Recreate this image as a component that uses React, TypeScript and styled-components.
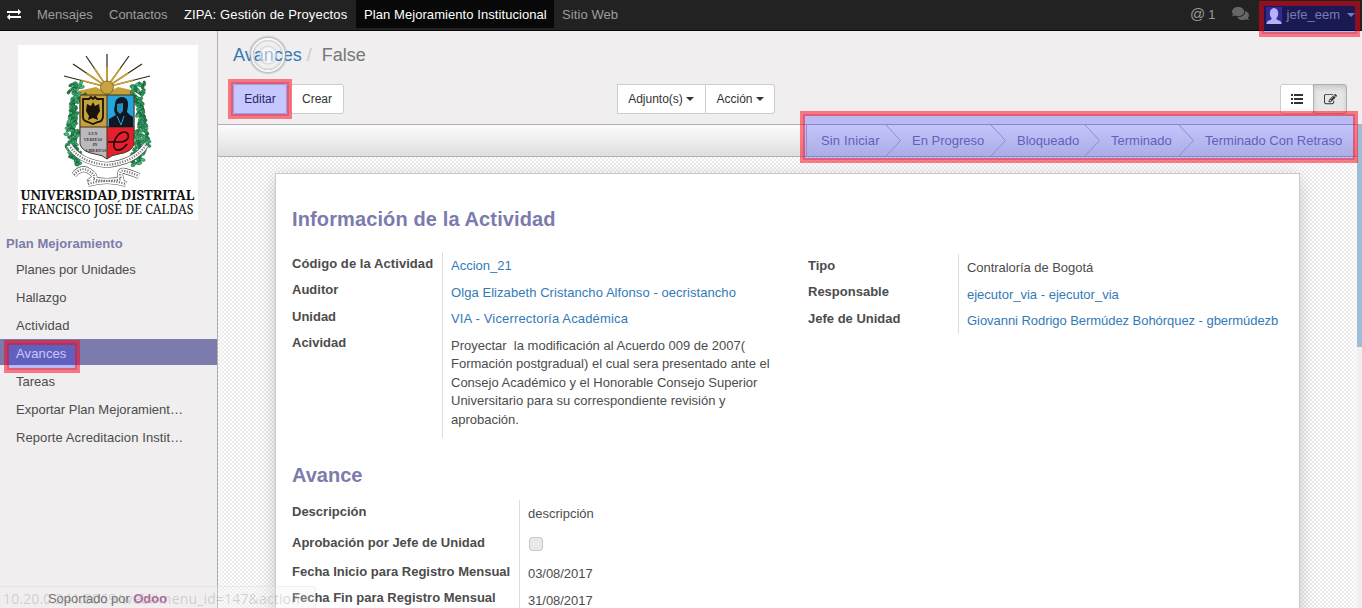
import React from 'react';
import styled, { createGlobalStyle, css } from 'styled-components';
import { FaComments } from 'react-icons/fa';

const Global = createGlobalStyle`
  * { box-sizing: border-box; }
  body { margin: 0; overflow: hidden; background: #fff; color: #4c4c4c;
    font: 13px/18px "Liberation Sans", Arial, sans-serif; }
`;
const sans = '"Liberation Sans", Arial, sans-serif';

const Page = styled.div`
  position: relative; width: 1362px; height: 608px; overflow: hidden;
  display: flex; flex-direction: column;
`;
const NavBar = styled.nav`
  height: 31px; flex: none; background: #222; border-bottom: 1px solid #080808;
  display: flex; align-items: stretch; color: #999; line-height: 30px;
`;
const NavIcon = styled.span`
  display: flex; align-items: center; width: 29px; padding: 0 0 3px 7px; color: #fff;
`;
const NavItem = styled.a<{ $tone?: 'bright' | 'active'; $w: number; $ls?: number }>`
  padding: 0 8px; color: ${p => (p.$tone ? '#fff' : '#9d9d9d')};
  background: ${p => (p.$tone === 'active' ? '#080808' : 'transparent')};
  height: 28px; white-space: nowrap; width: ${p => p.$w}px; letter-spacing: ${p => p.$ls ?? 0}px;
`;
const NavRight = styled.div`
  margin-left: auto; display: flex; align-items: center; padding-right: 7px; height: 30px;
`;
const Mention = styled.span`margin-right: 16px; height: 30px; display: flex; gap: 3px;`;
const At = styled.span`font-size: 15px; line-height: 27px;`;
const Chat = styled.span`display: flex; margin-right: 17px; color: #666; padding-bottom: 3px;`;
const User = styled.span`display: flex; align-items: center; color: #9d9d9d;`;
const UserName = styled.span`margin: 0 7px 0 5px; line-height: 32px;`;
const Caret = styled.i<{ $space?: number }>`
  display: inline-block; border: 4px solid transparent; border-top-color: currentColor;
  border-bottom: 0; margin-left: ${p => p.$space ?? 0}px; vertical-align: middle;
`;
const Body = styled.div`flex: 1; min-height: 0; display: flex;`;
const SideBar = styled.aside`
  width: 218px; flex: none; background: #f0eeee; border-right: 1px solid #afafb6;
  display: flex; flex-direction: column; padding-top: 14px;
`;
const LogoBox = styled.div`width: 180px; height: 175px; margin-left: 18px; background: #fff;`;
const MenuTitle = styled.h4`
  margin: 14px 0 3px 6px; font: bold 13px/20px ${sans}; color: #7c7bad; letter-spacing: .07px;
`;
const MenuItem = styled.a<{ $active?: boolean }>`
  height: 26px; margin-bottom: 2px; padding-left: 16px; line-height: 26px; white-space: nowrap;
  ${p => p.$active && css`
    background: #7c7bad; color: #fff; line-height: 30px; margin: -2px 0 4px; letter-spacing: .1px;
  `}
`;
const MenuText = styled.span<{ $ls: number }>`letter-spacing: ${p => p.$ls}px;`;
const Footer = styled.div`
  margin-top: auto; padding: 0 0 0 48px; line-height: 18px; letter-spacing: -.05px;
  b { color: #a24689; }
`;
const Main = styled.main`flex: 1; min-width: 0; display: flex; flex-direction: column;`;
const ControlPanel = styled.header`
  height: 94px; flex: none; background: #f0eeee; border-bottom: 1px solid #afafb6;
  padding: 13px 15px 0 15px;
`;
const Crumbs = styled.div`
  font-size: 18px; line-height: 22px; color: #777; height: 40px;
  a { color: #337ab7; }
  i { color: #ccc; font-style: normal; padding: 0 10px 0 5px; }
`;
const Tools = styled.div`display: flex; font-size: 12px; align-items: flex-start;`;
const Button = styled.button<{ $w: number; $joined?: boolean; $pressed?: boolean }>`
  width: ${p => p.$w}px; height: 30px; padding: 0; font: 12px/18px ${sans}; color: #333;
  background: ${p => (p.$pressed ? '#e6e6e6' : '#fff')};
  border: 1px solid ${p => (p.$pressed ? '#adadad' : '#ccc')}; border-radius: 3px;
  display: inline-flex; align-items: center; justify-content: center;
  ${p => p.$joined && css`border-radius: 0 3px 3px 0; margin-left: -1px;`}
  ${p => p.$pressed && css`box-shadow: inset 0 3px 5px rgba(0,0,0,.125);`}
`;
const CreateButton = styled(Button)`margin-left: 3px;`;
const SquareButton = styled(Button)`border-radius: 0; padding-right: 1px;`;
const Group = styled.div<{ $before: string }>`display: flex; margin-left: ${p => p.$before};`;
const Content = styled.div`flex: 1; min-height: 0; display: flex;`;
const View = styled.div`flex: 1; min-width: 0; display: flex; flex-direction: column;`;
const StatusBar = styled.div`
  height: 32px; flex: none; display: flex; justify-content: flex-end;
  background: linear-gradient(#fcfcfc, #dedede); border-bottom: 1px solid #afafb6;
`;
const Stages = styled.div`display: flex; border-left: 1px solid #bbb; color: #7c7bad; line-height: 32px;`;
const Stage = styled.span<{ $w: number; $pad: number }>`
  width: ${p => p.$w}px; padding-left: ${p => p.$pad}px; display: flex; white-space: nowrap;
  &:first-child { letter-spacing: .15px; }
`;
const Arrow = styled.svg`margin-left: auto; width: 16px; height: 31px; flex: none; overflow: visible;`;
const Scroll = styled.div`
  flex: 1; min-height: 0; overflow: hidden; display: flex; padding: 16px 0 0 57px;
  background: repeating-conic-gradient(#ececec 0 25%, #fff 0 50%) 0 0 / 4px 4px;
`;
const Sheet = styled.section`
  width: 1025px; height: 600px; flex: none; background: #fff; border: 1px solid #c8c8d3;
  box-shadow: 0 5px 18px rgba(0,0,0,.2); padding: 32px 16px 0;
`;
const ScrollTrack = styled.div`width: 5px; flex: none; background: #f0eeee;`;
const ScrollThumb = styled.div`height: 222px; background: #a0bbd6;`;
const Heading = styled.h2<{ $below: number; $ls?: number }>`
  margin: 0 0 ${p => p.$below}px; font: bold 20px/26px ${sans}; color: #7c7bad;
  letter-spacing: ${p => p.$ls ?? 0}px;
`;
const Columns = styled.div`display: flex; height: 186px; margin-bottom: 24px;`;
const FieldSet = styled.div<{ $label: number; $width: number; $top?: number }>`
  width: ${p => p.$width}px; display: grid; grid-template-columns: ${p => p.$label}px 1fr;
  align-items: start; margin-top: ${p => p.$top ?? 0}px; align-self: flex-start;
`;
const Labels = styled.div`
  font-weight: bold; display: flex; flex-direction: column; white-space: nowrap;
  padding-top: 3px; letter-spacing: .03px;
`;
const Values = styled.div<{ $bottom?: number }>`
  border-left: 1px solid #ddd; padding: 5px 0 ${p => p.$bottom ?? 9}px 8px;
  display: flex; flex-direction: column;
`;
const Cell = styled.div<{ $h?: number; $link?: boolean; $ls?: number }>`
  height: ${p => p.$h ?? 26.5}px; line-height: 18.5px; white-space: pre-wrap;
  color: ${p => (p.$link ? '#337ab7' : 'inherit')}; letter-spacing: ${p => p.$ls ?? 0}px;
`;
const Box = styled.span`
  display: block; width: 14px; height: 14px; margin: 4px 0 0 1px; border: 1px solid #c8c8c8;
  border-radius: 3px; background: #e9e9e9;
`;
const Marker = styled.div<{ $x: number; $y: number; $w: number; $h: number }>`
  position: absolute; left: ${p => p.$x + 3}px; top: ${p => p.$y + 3}px;
  width: ${p => p.$w - 6}px; height: ${p => p.$h - 6}px; background: rgba(0,0,255,.22);
  &::after { content: ''; position: absolute; inset: -3px; border: 5px solid rgba(255,0,16,.5); }
`;
const Ripple = styled.svg`position: absolute; left: 247px; top: 34px; width: 42px; height: 42px;`;
const UrlHint = styled.div`
  position: absolute; left: 0; top: 586px; width: 316px; height: 24px; padding-left: 3px;
  font: 14px/23px "Open Sans", sans-serif; white-space: nowrap; color: rgba(80,80,80,.22);
  background: rgba(240,240,240,.25); border: 1px solid rgba(160,160,160,.13); border-left: 0;
  border-radius: 0 4px 0 0; overflow: hidden; letter-spacing: .16px;
`;

const rays = [[33, 22], [42, 10], [55, 2], [76, 0], [98, 2], [111, 10], [119, 22]];

function ExchangeIcon() {
  return (
    <svg width="14" height="14" viewBox="0 0 1792 1792" fill="currentColor">
      <path d="M1792 1184v192q0 13-9.500 22.500t-22.500 9.500h-1376v192q0 13-9.500 22.500t-22.500 9.500q-12 0-24-10l-319-320q-9-9-9-22 0-14 9-23l320-320q9-9 23-9 13 0 22.500 9.500t9.500 22.500v192h1376q13 0 22.500 9.500t9.500 22.500zm0-544q0 14-9 23l-320 320q-9 9-23 9-13 0-22.500-9.500t-9.500-22.500v-192h-1376q-13 0-22.500-9.500t-9.500-22.500v-192q0-13 9.500-22.500t22.500-9.500h1376v-192q0-14 9-23t23-9q12 0 24 10l319 319q9 9 9 23z" />
    </svg>
  );
}

function ListIcon() {
  return (
    <svg width="12" height="10" viewBox="0 0 12 10" fill="#333">
      <path d="M0 0h2v2H0zM3 0h9v2H3zM0 4h2v2H0zM3 4h9v2H3zM0 8h2v2H0zM3 8h9v2H3z" />
    </svg>
  );
}

function EditIcon() {
  return (
    <svg width="13" height="13" viewBox="0 0 1792 1792" fill="#333">
      <path d="M888 1184l116-116-152-152-116 116v56h96v96h56zm440-720q-16-16-33 1l-350 350q-17 17-1 33t33-1l350-350q17-17 1-33zm80 594v190q0 119-84.500 203.500t-203.500 84.500h-832q-119 0-203.500-84.500t-84.500-203.500v-832q0-119 84.500-203.500t203.500-84.500h832q63 0 117 25 15 7 18 23 3 17-9 29l-49 49q-14 14-32 8-23-6-45-6h-832q-66 0-113 47t-47 113v832q0 66 47 113t113 47h832q66 0 113-47t47-113v-126q0-13 9-22l64-64q15-15 35-7t20 29zm-96-738l288 288-672 672h-288v-288zm444 132l-92 92-288-288 92-92q28-28 68-28t68 28l152 152q28 28 28 68t-28 68z" />
    </svg>
  );
}

// Outer edge of the laurel, as a distance from the shield's axis, by height.
const laurelEdge = (y: number) =>
  y < 50 ? 38 : y < 75 ? 34 + (y - 50) * 0.16 : y < 98 ? 38 + (y - 75) * 0.2 : 42.5 - (y - 98) * 0.35;
const scatter = (n: number) => {
  const v = Math.sin(n * 12.9898) * 43758.5453;
  return v - Math.floor(v);
};

function Laurel() {
  const greens = ['#2fae68', '#39c079', '#1d7c48', '#45b97a', '#2a9a5b'];
  return (
    <g>
      {Array.from({ length: 240 }, (_, i) => {
        const side = i % 2 ? 1 : -1;
        const n = i + 1;
        const y = 38 + (i / 240) * 82;
        const depth = y > 54 && y < 86 ? 7 : 13;
        const x = 89 + side * (laurelEdge(y) - scatter(n) * depth);
        return (
          <ellipse key={i} cx={x} cy={y} rx="2.600" ry="1.500" fill={greens[n % 5]} stroke="#14452a"
            strokeWidth=".4" transform={`rotate(${scatter(n + 500) * 180} ${x} ${y})`} />
        );
      })}
    </g>
  );
}

function Crest() {
  const ribbons = 'M51 100Q61 117 89 120Q117 117 128 100M56 130q7-9 15-4t4 8q14 4 28 0q-3-10 4-8t14 5M70 139q19-6 38 0';
  const shield = 'M62 50H116V99Q114 107 101 109Q93 110 89 114Q85 110 77 109Q64 107 62 99z';
  return (
    <svg width="180" height="175" viewBox="0 0 180 175">
      <g stroke="#30280f" strokeWidth="1.2">
        {rays.map(([x, y]) => <line key={x} x1="89" y1="42" x2={x + 13} y2={y + 9} />)}
      </g>
      <g stroke="#c5a03a" strokeWidth="1.8">
        {rays.map(([x, y]) => <line key={x} x1="89" y1="42" x2={89 + (x - 76) * 0.6} y2={42 + (y - 33) * 0.6} />)}
      </g>
      <path d="M60 46l18-4 11 6 11-6 18 4-4 4H64z" fill="#c7a038" />
      <g fill="#fff" stroke="#444" strokeWidth=".7">
        <path d="M55 56q-4 9 0 14q-4 8 2 18l5-3V56zM123 56q4 9 0 14q4 8-2 18l-5-3V56z" />
      </g>
      <Laurel />
      <circle cx="89" cy="42.500" r="6.500" fill="#c9a33b" stroke="#705c22" strokeWidth=".8" />
      <clipPath id="shield"><path d={shield} /></clipPath>
      <g clipPath="url(#shield)">
        <path d="M62 50H89V82H62z" fill="#c7a038" />
        <path d="M89 50H116V82H89z" fill="#25a5dc" />
        <path d="M62 82H89V116H62z" fill="#bab9bd" />
        <path d="M89 82H116V116H89z" fill="#e51f2b" />
      </g>
      <path d={shield + 'M89 50V114M62 82H116'} fill="none" stroke="#43341d" strokeWidth="1" />
      <path d="M65 54h6l2-2 2 2 2-2 2 2h6v18q-1 5-5 5l-5 2-5-2q-5-1-5-5z" fill="none" stroke="#18140c" strokeWidth="1.800" />
      <path d="M75 57l2 4 4-2 1 7-3 5 1 4-5-2-5 2 1-4-3-5 1-7 4 2z" fill="#18140c" />
      <path d="M97 60q0-7 6-8q8 0 7 9l-1 6 3 3 3 2v10H91v-8l7-4q-3-4-1-10z" fill="#101722" />
      <path d="M99 59l6-1v8l-3 3-3-3z" fill="#268ebb" />
      <path d="M99 71l4 9 3-9" fill="none" stroke="#26a5db" />
      <g fill="#333" fontFamily="Liberation Serif" fontSize="4.200" fontWeight="bold" textAnchor="middle">
        <text x="75" y="90">LUX</text><text x="75" y="95.500">VERITAS</text>
        <text x="77" y="101">IN</text><text x="78" y="106.500">LIBERTAS</text>
      </g>
      <path d="M90 97H104Q112 95 110 89Q107 85 101 89Q95 95 96 102Q98 107 104 104Q107 102 109 99" fill="none" stroke="#180b0c" strokeWidth="1.600" />
      <g fill="none">
        <path d={ribbons} stroke="#555" strokeWidth="6" />
        <path d={ribbons} stroke="#fff" strokeWidth="4.900" />
        <path d={ribbons} stroke="#777" strokeWidth="2.200" strokeDasharray="1.200 1.400" />
      </g>
      <g fill="#111" fontFamily="Noto Serif, Liberation Serif, serif" textAnchor="middle">
        <text x="89.500" y="154.500" fontSize="14.500" fontWeight="bold" textLength="174" lengthAdjust="spacingAndGlyphs">UNIVERSIDAD DISTRITAL</text>
        <text x="89.500" y="169" fontSize="13.800" textLength="172" lengthAdjust="spacingAndGlyphs">FRANCISCO JOSÉ DE CALDAS</text>
      </g>
    </svg>
  );
}

const menu: [string, number][] = [
  ['Planes por Unidades', -0.05], ['Hallazgo', 0], ['Actividad', 0.08], ['Avances', 0.12],
  ['Tareas', 0], ['Exportar Plan Mejoramient…', 0], ['Reporte Acreditacion Instit…', 0.09],
];
const stages: [string, number, number][] = [
  ['Sin Iniciar', 94, 14], ['En Progreso', 105, 11], ['Bloqueado', 94, 11], ['Terminado', 94, 11],
];

export default function App() {
  return (
    <Page>
      <Global />
      <NavBar>
        <NavIcon><ExchangeIcon /></NavIcon>
        <NavItem $w={72}>Mensajes</NavItem>
        <NavItem $w={75}>Contactos</NavItem>
        <NavItem $w={180} $tone="bright" $ls={0.15}>ZIPA: Gestión de Proyectos</NavItem>
        <NavItem $w={198} $tone="active" $ls={0.07}>Plan Mejoramiento Institucional</NavItem>
        <NavItem $w={76} $ls={0.08}>Sitio Web</NavItem>
        <NavRight>
          <Mention><At>@</At>1</Mention>
          <Chat><FaComments size={17} /></Chat>
          <User>
            <svg width="16" height="17" viewBox="0 0 16 17">
              <rect width="16" height="17" fill="#493274" />
              <ellipse cx="8" cy="6.500" rx="4.200" ry="5.500" fill="#e4e6fa" />
              <path d="M6 10h4q0 3 3 3.500 2.500.5 2.500 3.500H.5q0-3 2.500-3.500 3-.5 3-3.500z" fill="#e4e6fa" />
            </svg>
            <UserName>jefe_eem</UserName><Caret />
          </User>
        </NavRight>
      </NavBar>
      <Body>
        <SideBar>
          <LogoBox><Crest /></LogoBox>
          <MenuTitle>Plan Mejoramiento</MenuTitle>
          {menu.map(([name, ls]) => (
            <MenuItem key={name} $active={name === 'Avances'}><MenuText $ls={ls}>{name}</MenuText></MenuItem>
          ))}
          <Footer>Soportado por <b>Odoo</b></Footer>
        </SideBar>
        <Main>
          <ControlPanel>
            <Crumbs><a>Avances</a><i>/</i>False</Crumbs>
            <Tools>
              <Button $w={54}>Editar</Button>
              <CreateButton $w={54}>Crear</CreateButton>
              <Group $before="273px">
                <SquareButton $w={89}>Adjunto(s)<Caret $space={3} /></SquareButton>
                <Button $w={70} $joined>Acción<Caret $space={3} /></Button>
              </Group>
              <Group $before="auto">
                <Button $w={34}><ListIcon /></Button>
                <Button $w={34} $joined $pressed><EditIcon /></Button>
              </Group>
            </Tools>
          </ControlPanel>
          <Content>
            <View>
              <StatusBar>
                <Stages>
                  {stages.map(([name, w, pad]) => (
                    <Stage key={name} $w={w} $pad={pad}>{name}
                      <Arrow viewBox="0 0 16 31"><path d="M1 0L15.500 15.500L1 31" fill="none" stroke="#b4b4be" /></Arrow>
                    </Stage>
                  ))}
                  <Stage $w={163} $pad={11}>Terminado Con Retraso</Stage>
                </Stages>
              </StatusBar>
              <Scroll>
                <Sheet>
                  <Heading $below={20} $ls={0.12}>Información de la Actividad</Heading>
                  <Columns>
                    <FieldSet $label={150} $width={516}>
                      <Labels>
                        <Cell $h={26} $ls={0.07}>Código de la Actividad</Cell><Cell>Auditor</Cell>
                        <Cell $h={26}>Unidad</Cell><Cell>Acividad</Cell>
                      </Labels>
                      <Values>
                        <Cell $link>Accion_21</Cell>
                        <Cell $link $ls={0.065}>Olga Elizabeth Cristancho Alfonso - oecristancho</Cell>
                        <Cell $link $ls={0.16}>VIA - Vicerrectoría Académica</Cell>
                        <Cell $h={92}>{'Proyectar  la modificación al Acuerdo 009 de 2007(\nFormación postgradual) el cual sera presentado ante el\nConsejo Académico y el Honorable Consejo Superior\nUniversitario para su correspondiente revisión y\naprobación.'}</Cell>
                      </Values>
                    </FieldSet>
                    <FieldSet $label={150} $width={475} $top={2}>
                      <Labels><Cell $h={26}>Tipo</Cell><Cell $h={27}>Responsable</Cell><Cell>Jefe de Unidad</Cell></Labels>
                      <Values $bottom={4}>
                        <Cell $ls={-0.05}>Contraloría de Bogotá</Cell>
                        <Cell $link>ejecutor_via - ejecutor_via</Cell>
                        <Cell $h={18} $link $ls={-0.05}>Giovanni Rodrigo Bermúdez Bohórquez - gbermúdezb</Cell>
                      </Values>
                    </FieldSet>
                  </Columns>
                  <Heading $below={12}>Avance</Heading>
                  <FieldSet $label={227} $width={516}>
                    <Labels>
                      <Cell $h={31}>Descripción</Cell><Cell $h={29}>Aprobación por Jefe de Unidad</Cell>
                      <Cell $h={26}>Fecha Inicio para Registro Mensual</Cell><Cell>Fecha Fin para Registro Mensual</Cell>
                    </Labels>
                    <Values>
                      <Cell $h={28}>descripción</Cell><Cell $h={32}><Box /></Cell>
                      <Cell $h={27} $ls={-0.05}>03/08/2017</Cell><Cell $ls={-0.05}>31/08/2017</Cell>
                    </Values>
                  </FieldSet>
                </Sheet>
              </Scroll>
            </View>
            <ScrollTrack><ScrollThumb /></ScrollTrack>
          </Content>
        </Main>
      </Body>
      <UrlHint>10.20.0.241:8069/web#menu_id=147&amp;action</UrlHint>
      <Ripple viewBox="0 0 42 42">
        <circle cx="21" cy="21" r="16.500" fill="none" stroke="#999" strokeOpacity=".22" strokeWidth="6" />
        <circle cx="21" cy="21" r="16.500" fill="none" stroke="#aaa" strokeOpacity=".5" strokeWidth="3.500" />
        <circle cx="21" cy="21" r="16" fill="none" stroke="#fff" strokeOpacity=".9" strokeWidth="1.800" />
        <circle cx="21" cy="21" r="8.500" fill="#fff" fillOpacity=".5" stroke="#bbb" strokeOpacity=".3" strokeWidth="2.500" />
        <circle cx="21" cy="21" r="7.500" fill="none" stroke="#fff" strokeOpacity=".4" strokeWidth="1" />
      </Ripple>
      <Marker $x={228} $y={79} $w={64} $h={40} />
      <Marker $x={1259} $y={1} $w={101} $h={36} />
      <Marker $x={800} $y={111} $w={558} $h={52} />
      <Marker $x={4} $y={340} $w={76} $h={33} />
    </Page>
  );
}
